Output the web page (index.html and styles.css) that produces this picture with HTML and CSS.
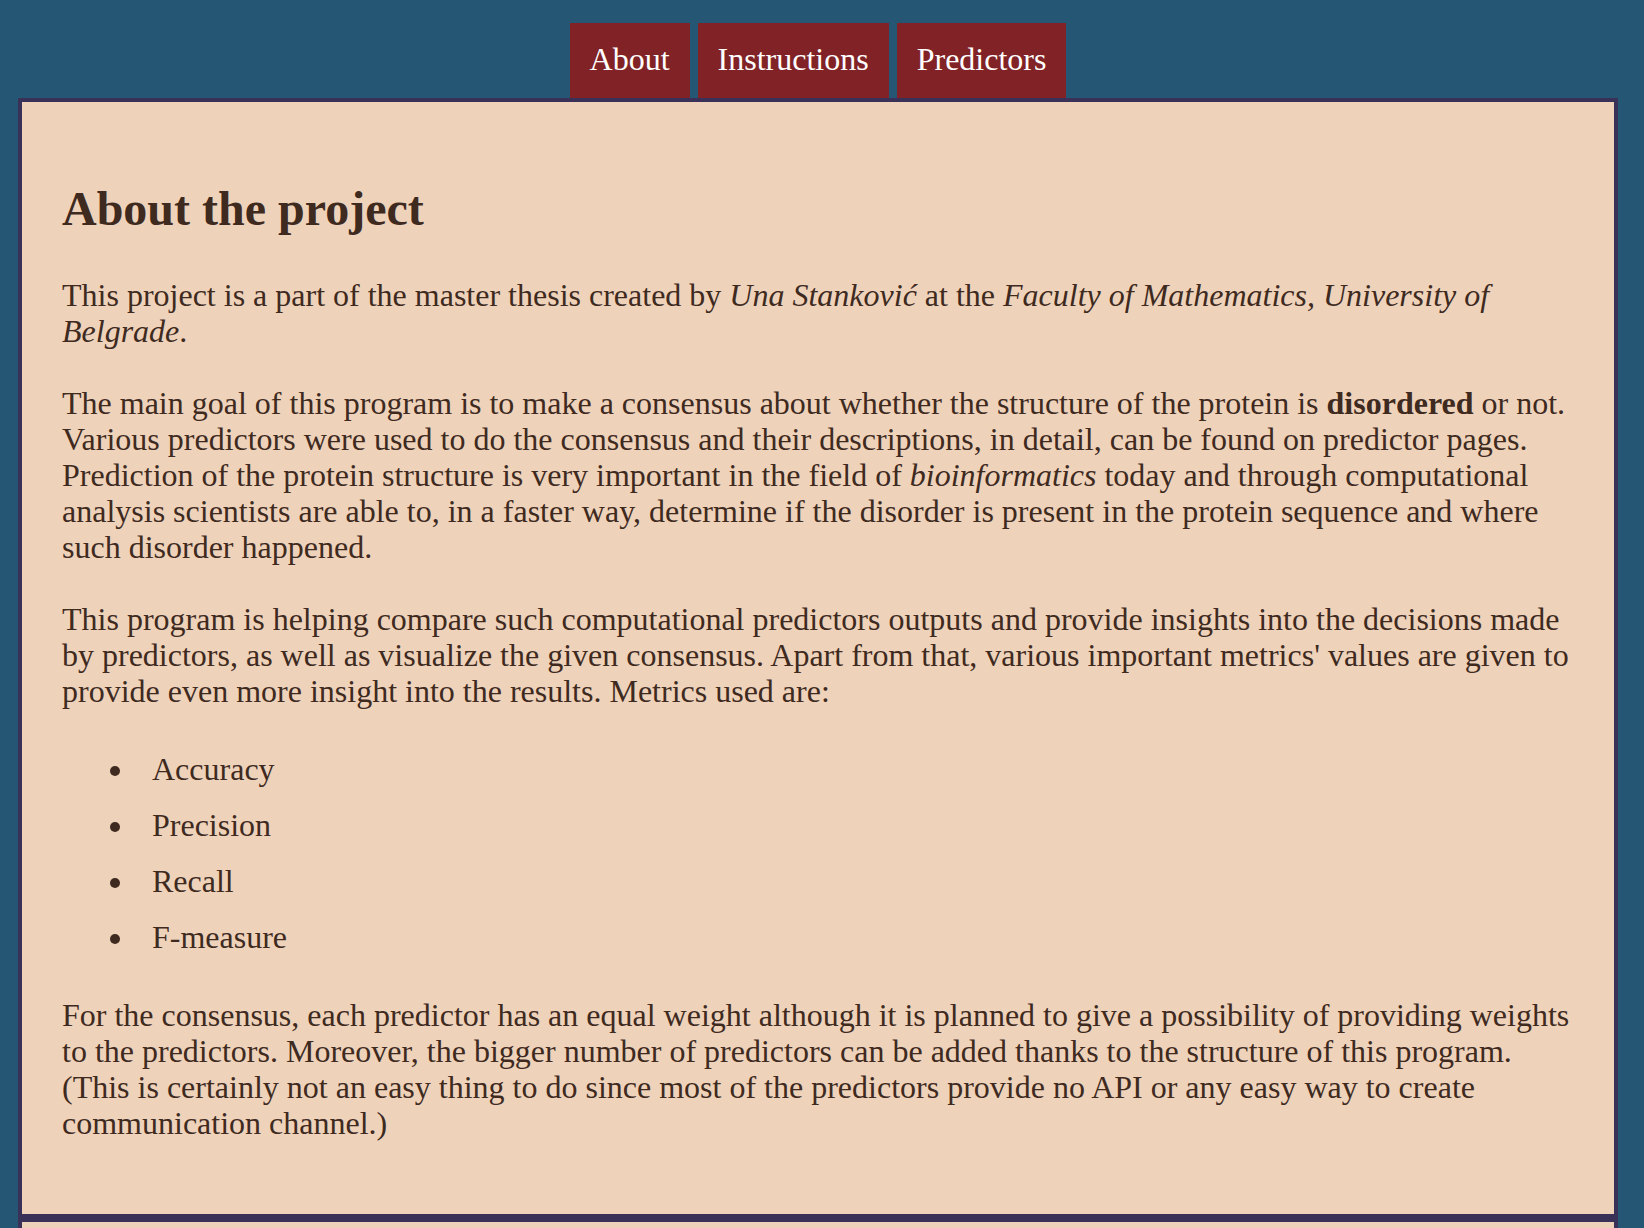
FILE: index.html
```html
<!DOCTYPE html>
<html lang="en">
<head>
<meta charset="utf-8">
<title>About the project</title>
<link rel="stylesheet" href="styles.css">
</head>
<body>
<div class="page">
  <nav class="tabs">
    <a class="tab" href="#">About</a>
    <a class="tab" href="#">Instructions</a>
    <a class="tab" href="#">Predictors</a>
  </nav>
  <main class="panel">
    <h1 class="title">About the project</h1>
    <p class="text">This project is a part of the master thesis created by <em>Una Stanković</em> at the <em>Faculty of Mathematics, University of Belgrade</em>.</p>
    <p class="text">The main goal of this program is to make a consensus about whether the structure of the protein is <strong>disordered</strong> or not. Various predictors were used to do the consensus and their descriptions, in detail, can be found on predictor pages. Prediction of the protein structure is very important in the field of <em>bioinformatics</em> today and through computational analysis scientists are able to, in a faster way, determine if the disorder is present in the protein sequence and where such disorder happened.</p>
    <p class="text">This program is helping compare such computational predictors outputs and provide insights into the decisions made by predictors, as well as visualize the given consensus. Apart from that, various important metrics' values are given to provide even more insight into the results. Metrics used are:</p>
    <ul class="metrics">
      <li class="metric">Accuracy</li>
      <li class="metric">Precision</li>
      <li class="metric">Recall</li>
      <li class="metric">F-measure</li>
    </ul>
    <p class="text last">For the consensus, each predictor has an equal weight although it is planned to give a possibility of providing weights to the predictors. Moreover, the bigger number of predictors can be added thanks to the structure of this program. (This is certainly not an easy thing to do since most of the predictors provide no API or any easy way to create communication channel.)</p>
  </main>
  <section class="panel panel-next"></section>
</div>
</body>
</html>
```

FILE: styles.css
```css
html, body {
  margin: 0;
  padding: 0;
}

body {
  background: #255673;
  color: #3f2a1f;
  font-family: "Liberation Serif", "Times New Roman", serif;
  font-size: 32px;
  line-height: 36px;
}

.page {
  padding: 0 26px 0 18px;
}

.tabs {
  display: flex;
  justify-content: center;
  gap: 8px;
  padding-top: 23px;
}

.tab {
  display: block;
  background: #812326;
  color: #ffffff;
  text-decoration: none;
  padding: 18px 20px 21px;
  line-height: 36px;
}

.panel {
  display: block;
  background: #eed3ba;
  border: 4px solid #393157;
  padding: 40px 40px 37px;
}

.title {
  font-size: 48px;
  line-height: 56px;
  font-weight: bold;
  margin: 39px 0 40px;
}

.text {
  margin: 0 0 36px;
}

.metrics {
  margin: 42px 0;
  padding: 0 0 0 74px;
}

.metric {
  padding-left: 16px;
  margin-bottom: 20px;
}

.metric:last-child {
  margin-bottom: 0;
}

.panel-next {
  border-top: 4px solid #393157;
  min-height: 300px;
}
```
